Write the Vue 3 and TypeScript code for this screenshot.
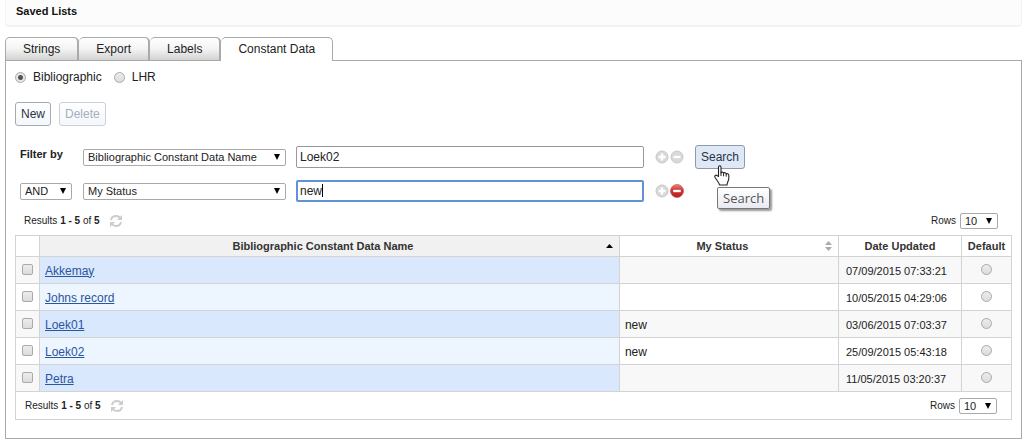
<script setup lang="ts">
import { computed, ref } from 'vue'

interface RecordRow {
  name: string
  status: string
  updated: string
}

const tabs: string[] = ['Strings', 'Export', 'Labels', 'Constant Data']
const activeTab = ref('Constant Data')
const kind = ref('bibliographic')
const firstField = ref('Bibliographic Constant Data Name')
const secondField = ref('My Status')
const operator = ref('AND')
const firstTerm = ref('Loek02')
const secondTerm = ref('new')
const rowsPerPage = ref('10')
const fields: string[] = ['Bibliographic Constant Data Name', 'My Status']

const rows = ref<RecordRow[]>([
  { name: 'Akkemay', status: '', updated: '07/09/2015 07:33:21' },
  { name: 'Johns record', status: '', updated: '10/05/2015 04:29:06' },
  { name: 'Loek01', status: 'new', updated: '03/06/2015 07:03:37' },
  { name: 'Loek02', status: 'new', updated: '25/09/2015 05:43:18' },
  { name: 'Petra', status: '', updated: '11/05/2015 03:20:37' },
])
const total = computed(() => rows.value.length)
</script>

<template>
  <div class="page">
    <header class="title-bar"><h1>Saved Lists</h1></header>

    <nav class="tabs" role="tablist">
      <button
        v-for="tab in tabs"
        :key="tab"
        type="button"
        role="tab"
        class="tab"
        :class="{ active: tab === activeTab }"
        :aria-selected="tab === activeTab"
        @click="activeTab = tab"
      >{{ tab }}</button>
    </nav>

    <main class="panel">
      <div class="kinds">
        <label><input v-model="kind" class="radio" type="radio" name="kind" value="bibliographic" />Bibliographic</label>
        <label><input v-model="kind" class="radio" type="radio" name="kind" value="lhr" />LHR</label>
      </div>

      <div class="actions">
        <button type="button" class="btn">New</button>
        <button type="button" class="btn" disabled>Delete</button>
      </div>

      <form class="filters" @submit.prevent>
        <div class="filter-row">
          <strong class="lead filter-label">Filter by</strong>
          <span class="select field">
            <select v-model="firstField" aria-label="First field">
              <option v-for="f in fields" :key="f">{{ f }}</option>
            </select>
            <svg class="arrow" viewBox="0 0 6 6" aria-hidden="true"><path d="M0 0H6L3 6Z" /></svg>
          </span>
          <span class="term"><input v-model="firstTerm" type="text" aria-label="First term" /></span>
          <span class="pair">
            <button type="button" class="round" aria-label="Add line">
              <svg viewBox="0 0 14 14"><circle cx="7" cy="7" r="6" fill="#d9d9d9" stroke="#c8c8c8" /><path d="M7 3.5V10.5M3.5 7H10.5" stroke="#fff" stroke-width="2.4" /></svg>
            </button>
            <button type="button" class="round" aria-label="Remove line" disabled>
              <svg viewBox="0 0 14 14"><circle cx="7" cy="7" r="6" fill="#d9d9d9" stroke="#c8c8c8" /><path d="M3.5 7H10.5" stroke="#fff" stroke-width="2.4" /></svg>
            </button>
          </span>
          <span class="search">
            <button type="submit" class="btn hot">Search</button>
            <svg class="hand" viewBox="0 0 16 21" aria-hidden="true">
              <path
                d="M4.5 11.5V2.2C4.5 .3 7 .3 7 2.2V8C7.3 6.7 9.4 6.8 9.6 8.3C10 7.3 12 7.5 12.2 9C12.7 8.2 14.8 8.5 14.8 10.3V13.5C14.8 15.5 13.2 17 13 20H5.5C5.2 17.5 3.1 15.8 1 12.3C.1 10.7 1.8 9.5 3 10.5Z"
                fill="#fff" stroke="#222" stroke-width="1.1" stroke-linejoin="round"
              />
              <path d="M7 7.5V11M9.6 8.3V11.3M12.2 9V11.6" stroke="#222" stroke-width="1" fill="none" />
            </svg>
            <span class="tip" role="tooltip">Search</span>
          </span>
        </div>

        <div class="filter-row">
          <span class="lead select operator">
            <select v-model="operator" aria-label="Operator">
              <option>AND</option>
              <option>OR</option>
            </select>
            <svg class="arrow" viewBox="0 0 6 6" aria-hidden="true"><path d="M0 0H6L3 6Z" /></svg>
          </span>
          <span class="select field">
            <select v-model="secondField" aria-label="Second field">
              <option v-for="f in fields" :key="f">{{ f }}</option>
            </select>
            <svg class="arrow" viewBox="0 0 6 6" aria-hidden="true"><path d="M0 0H6L3 6Z" /></svg>
          </span>
          <span class="term current">
            <input v-model="secondTerm" type="text" aria-label="Second term" /><i class="caret"></i>
          </span>
          <span class="pair">
            <button type="button" class="round" aria-label="Add line">
              <svg viewBox="0 0 14 14"><circle cx="7" cy="7" r="6" fill="#d9d9d9" stroke="#c8c8c8" /><path d="M7 3.5V10.5M3.5 7H10.5" stroke="#fff" stroke-width="2.4" /></svg>
            </button>
            <button type="button" class="round" aria-label="Remove line">
              <svg viewBox="0 0 14 14">
                <defs>
                  <linearGradient id="red" x2="0" y2="1"><stop stop-color="#e88683" /><stop offset=".45" stop-color="#d32f2d" /><stop offset="1" stop-color="#b3201f" /></linearGradient>
                </defs>
                <circle cx="7" cy="7" r="6.5" fill="url(#red)" stroke="#c05552" stroke-width=".7" />
                <path d="M3.2 7H10.8" stroke="#fff" stroke-width="2.4" />
              </svg>
            </button>
          </span>
        </div>
      </form>

      <div v-for="place in ['top', 'bottom']" :key="place" class="pager" :class="place">
        <span>Results <b>1 - {{ total }}</b> of <b>{{ total }}</b></span>
        <button type="button" class="refresh" aria-label="Refresh">
          <svg viewBox="0 0 14 14" aria-hidden="true">
            <path d="M2 6C2.5 3.3 4.5 2 7 2C8.8 2 10.2 2.7 11.2 4M12 8C11.5 10.7 9.5 12 7 12C5.2 12 3.8 11.3 2.8 10" fill="none" stroke="#ccc" stroke-width="2" />
            <path d="M13 1V6H8ZM1 13V8H6Z" fill="#ccc" />
          </svg>
        </button>
        <label class="rows" :for="'rows-' + place">Rows</label>
        <span class="select count">
          <select :id="'rows-' + place" v-model="rowsPerPage">
            <option>10</option>
            <option>20</option>
          </select>
          <svg class="arrow" viewBox="0 0 6 6" aria-hidden="true"><path d="M0 0H6L3 6Z" /></svg>
        </span>
      </div>

      <table>
        <colgroup>
          <col class="c-check" /><col /><col class="c-status" /><col class="c-date" /><col class="c-default" />
        </colgroup>
        <thead>
          <tr>
            <th></th>
            <th class="sorted">
              <div class="head">
                <span>Bibliographic Constant Data Name</span>
                <svg width="7" height="4" viewBox="0 0 7 4"><path d="M0 4L3.5 0L7 4Z" fill="#000" /></svg>
              </div>
            </th>
            <th>
              <div class="head">
                <span>My Status</span>
                <svg width="7" height="10" viewBox="0 0 7 10"><path d="M0 4L3.5 0L7 4ZM0 6L3.5 10L7 6Z" fill="#aaa" /></svg>
              </div>
            </th>
            <th>Date Updated</th>
            <th>Default</th>
          </tr>
        </thead>
        <tbody>
          <tr v-for="row in rows" :key="row.name">
            <td class="mid"><input class="check" type="checkbox" :aria-label="'Select ' + row.name" /></td>
            <td class="name"><a href="#">{{ row.name }}</a></td>
            <td>{{ row.status }}</td>
            <td class="date">{{ row.updated }}</td>
            <td class="mid"><input class="radio" type="radio" name="default" :aria-label="'Default ' + row.name" /></td>
          </tr>
        </tbody>
      </table>
    </main>
  </div>
</template>

<style>
body {
  margin: 0;
  background: #fff;
}
</style>

<style scoped>
* {
  box-sizing: border-box;
}
.page {
  padding: 0 2px 4px 5px;
  font: 12px/16px "Liberation Sans", Arial, sans-serif;
  color: #222;
}
button,
input,
select {
  font: inherit;
  color: inherit;
  margin: 0;
}
.title-bar {
  height: 27px;
  padding: 3px 10px;
  background: #fcfcfc;
  border: solid #f3f3f3;
  border-width: 0 1px 2px;
  border-radius: 0 0 4px 4px;
}
h1 {
  margin: 0;
  font-size: 11px;
  line-height: 16px;
  color: #111;
}
.tabs {
  display: flex;
  margin-top: 10px;
}
.tab {
  height: 23px;
  padding: 0 17px;
  border: 1px solid #aaa;
  border-bottom: 0;
  border-right-width: 2px;
  border-left-width: 0;
  border-radius: 5px 5px 0 0;
  background: linear-gradient(#fff, #f3f3f3 50%, #d3d3d3);
}
.tab:first-child {
  border-left-width: 1px;
}
.tab.active {
  height: 24px;
  margin-bottom: -1px;
  padding-bottom: 1px;
  border-right-width: 1px;
  background: #fff;
  position: relative;
}
.panel {
  display: flex;
  flex-direction: column;
  padding: 8px 9px 18px;
  border: 1px solid #aaa;
}
.kinds {
  display: flex;
  gap: 12px;
}
.kinds label {
  display: flex;
  align-items: center;
  gap: 7px;
}
.radio,
.check {
  appearance: none;
  display: block;
  width: 11px;
  height: 11px;
  border: 1px solid #aaa;
  background: linear-gradient(#ececec, #dcdcdc);
}
.radio {
  border-radius: 50%;
}
.radio:checked {
  background: radial-gradient(circle, #555 0 2px, #e6e6e6 3px);
}
.check {
  border-radius: 2px;
}
.actions {
  display: flex;
  gap: 8px;
  margin-top: 17px;
}
.btn {
  height: 24px;
  padding: 0 5px;
  border: 1px solid #a3abb8;
  border-radius: 3px;
  background: linear-gradient(#fff, #f4f7fb);
  color: #2b3446;
}
.btn:disabled {
  border-color: #ccd0d6;
  color: #a3adbd;
}
.btn.hot {
  background: #dfe8f5;
  border-color: #8e99ab;
}
.filters {
  display: grid;
  gap: 10px;
  margin: 19px 0 0 5px;
}
.filter-row {
  display: flex;
  align-items: center;
  height: 24px;
}
.lead {
  flex: none;
}
.filter-label {
  width: 63px;
  align-self: flex-start;
  line-height: 18px;
  font-size: 11px;
}
.operator {
  width: 52px;
  margin-right: 11px;
}
.select {
  display: inline-grid;
  align-items: center;
}
.select select {
  grid-area: 1 / 1;
  appearance: none;
  width: 100%;
  height: 17px;
  padding: 0 16px 0 4px;
  border: 1px solid #aaa;
  border-radius: 2px;
  background: #fff;
  font-size: 11px;
  line-height: 14px;
}
.arrow {
  grid-area: 1 / 1;
  justify-self: end;
  width: 6px;
  height: 6px;
  margin-right: 6px;
  fill: #000;
  pointer-events: none;
}
.field {
  flex: 0 1 203px;
}
.term {
  position: relative;
  flex: 0 1 348px;
  margin-left: 10px;
}
.term input {
  display: block;
  width: 100%;
  height: 22px;
  padding: 0 3px;
  border: 1px solid #999;
  border-radius: 2px;
  outline: none;
}
.term.current input {
  padding: 0 2px;
  border: 2px solid #6292d6;
}
.caret {
  position: absolute;
  left: 26px;
  top: 4px;
  width: 1px;
  height: 13px;
  background: #000;
}
.pair {
  display: flex;
  gap: 1px;
  margin-left: 11px;
}
.round,
.refresh {
  padding: 0;
  border: 0;
  background: none;
}
.round svg,
.refresh svg {
  display: block;
  width: 14px;
  height: 14px;
}
.search {
  position: relative;
  margin-left: 11px;
}
.search .btn {
  display: block;
}
.hand {
  position: absolute;
  left: 19px;
  top: 20px;
  width: 16px;
  height: 21px;
  z-index: 2;
}
.tip {
  position: absolute;
  left: 22px;
  top: 42px;
  padding: 1px 5px;
  border: 1px solid #777;
  border-radius: 2px;
  background: linear-gradient(#fff, #e8eaf2);
  box-shadow: 2px 2px 2px #999;
  font: 13px/18px "Open Sans", "Noto Sans", sans-serif;
  color: #555;
  z-index: 1;
}
.pager {
  display: flex;
  align-items: center;
  height: 28px;
  padding: 0 14px 0 9px;
  font-size: 10px;
}
.pager.top {
  height: 32px;
  padding-top: 4px;
}
.pager.bottom {
  order: 2;
  border: solid #d3d3d3;
  border-width: 0 1px 1px;
}
.refresh {
  margin-left: 9px;
}
.rows {
  margin-left: auto;
}
.count {
  width: 38px;
  margin-left: 4px;
}
.count select {
  height: 16px;
}
table {
  order: 1;
  width: 100%;
  table-layout: fixed;
  border-collapse: collapse;
}
.c-check {
  width: 24px;
}
.c-status {
  width: 22%;
}
.c-date {
  width: 123px;
}
.c-default {
  width: 50px;
}
th,
td {
  padding: 0 5px;
  border: 1px solid #d3d3d3;
}
th {
  height: 21px;
  padding: 0 4px;
  font-size: 11px;
  color: #333;
}
th.sorted {
  background: #f1f1f1;
}
.head {
  display: flex;
  align-items: center;
  padding-right: 2px;
}
.head span {
  flex: 1;
  padding-right: 4px;
}
td {
  height: 27px;
  padding-top: 1px;
}
tbody tr:nth-child(odd) {
  background: #f8f8f8;
}
td.name {
  background: #edf5ff;
}
tr:nth-child(odd) td.name {
  background: #d9e8fd;
}
td.mid .radio,
td.mid .check {
  margin: 0 auto;
}
td.mid {
  padding: 0 5px 2px;
}
td.date {
  padding-left: 7px;
  font-size: 11px;
  white-space: nowrap;
}
a {
  color: #2a55a0;
}
</style>
